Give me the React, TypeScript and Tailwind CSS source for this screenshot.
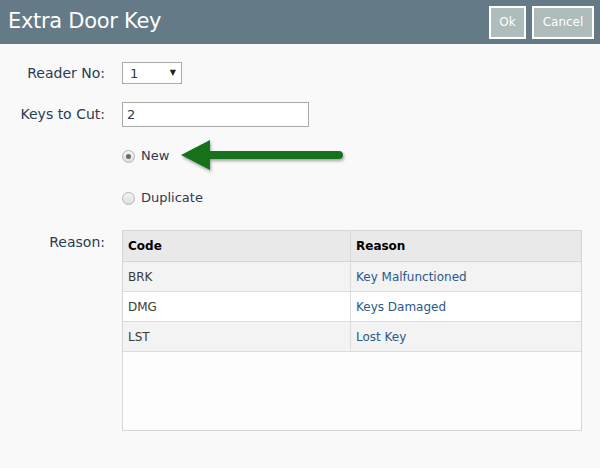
import React from 'react';

const rows = [
  { code: 'BRK', reason: 'Key Malfunctioned', bg: 'bg-[#f3f3f3]' },
  { code: 'DMG', reason: 'Keys Damaged', bg: 'bg-white' },
  { code: 'LST', reason: 'Lost Key', bg: 'bg-[#f3f3f3]' },
];

const Radio = ({ checked, label }: { checked?: boolean; label: string }) => (
  <label className="flex items-center h-5 gap-[6px]">
    <span className="w-[13px] h-[13px] rounded-full border border-[#b5b5b5] bg-gradient-to-b from-[#f4f4f4] to-[#dedede] flex items-center justify-center">
      {checked && <span className="w-[5px] h-[5px] rounded-full bg-[#6b6b6b]" />}
    </span>
    <span className="text-[13px] text-[#2b3a55]">{label}</span>
  </label>
);

const Arrow = () => (
  <svg width="170" height="40" viewBox="0 0 170 40" className="absolute left-[56px] top-[-9px]">
    <defs>
      <filter id="sh" x="-10%" y="-30%" width="120%" height="180%">
        <feDropShadow dx="1" dy="2" stdDeviation="1.5" floodColor="#000" floodOpacity="0.35" />
      </filter>
    </defs>
    <g filter="url(#sh)" fill="#16731f">
      <path d="M3 18 L32 3 L32 14 L161 14 A4 4 0 0 1 161 22 L32 22 L32 33 Z" />
    </g>
  </svg>
);

export default function App() {
  return (
    <div className="w-[600px] h-[468px] bg-[#f9f9f9] font-['DejaVu_Sans',sans-serif] overflow-hidden">
      <div className="h-[44px] bg-[#647a87] flex items-center justify-between pl-[8px] pr-[6px]">
        <h1 className="text-white text-[21px] font-['DejaVu_Sans',sans-serif] tracking-[-0.3px]">Extra Door Key</h1>
        <div className="flex gap-[6px]">
          <button className="h-[33px] w-[37px] border-2 border-white bg-[#aebcbb] text-white text-[12px]">Ok</button>
          <button className="h-[33px] w-[62px] border-2 border-white bg-[#aebcbb] text-white text-[12px]">Cancel</button>
        </div>
      </div>

      <div className="pt-[18px] text-[14px] text-[#2b3a55]">
        <div className="flex items-center h-[22px]">
          <div className="w-[105px] text-right">Reader No:</div>
          <div className="ml-[17px] w-[60px] h-[22px] border border-[#a9a9a9] bg-white flex items-center justify-between pl-[7px] pr-[5px]">
            <span className="pt-[2px] text-[13px]">1</span>
            <span className="text-[8px] text-[#222]">▼</span>
          </div>
        </div>

        <div className="flex items-center h-[25px] mt-[18px]">
          <div className="w-[105px] text-right">Keys to Cut:</div>
          <div className="ml-[17px] w-[187px] h-[25px] border border-[#a9a9a9] bg-white flex items-center pl-[4px]">
            <span className="pt-[1px] text-[13px]">2</span>
          </div>
        </div>

        <div className="ml-[122px] mt-[19px] relative">
          <Radio checked label="New" />
          <Arrow />
        </div>
        <div className="ml-[122px] mt-[22px]">
          <Radio label="Duplicate" />
        </div>

        <div className="flex mt-[22px]">
          <div className="w-[105px] text-right pt-[2px]">Reason:</div>
          <div className="ml-[17px] w-[460px] h-[201px] border border-[#d6d6d6] bg-[#fdfdfd] text-[12px]">
            <div className="flex h-[31px] bg-[#e9e9e9] border-b border-[#d6d6d6] font-bold text-black">
              <div className="w-[228px] border-r border-[#d6d6d6] flex items-center pl-[5px]">Code</div>
              <div className="flex-1 flex items-center pl-[5px]">Reason</div>
            </div>
            {rows.map((r) => (
              <div key={r.code} className={`flex h-[30px] border-b border-[#dcdcdc] ${r.bg}`}>
                <div className="w-[228px] border-r border-[#dcdcdc] flex items-center pl-[5px] text-[#3a3a3a]">{r.code}</div>
                <div className="flex-1 flex items-center pl-[5px] text-[#2b5a8a]">{r.reason}</div>
              </div>
            ))}
          </div>
        </div>
      </div>
    </div>
  );
}
